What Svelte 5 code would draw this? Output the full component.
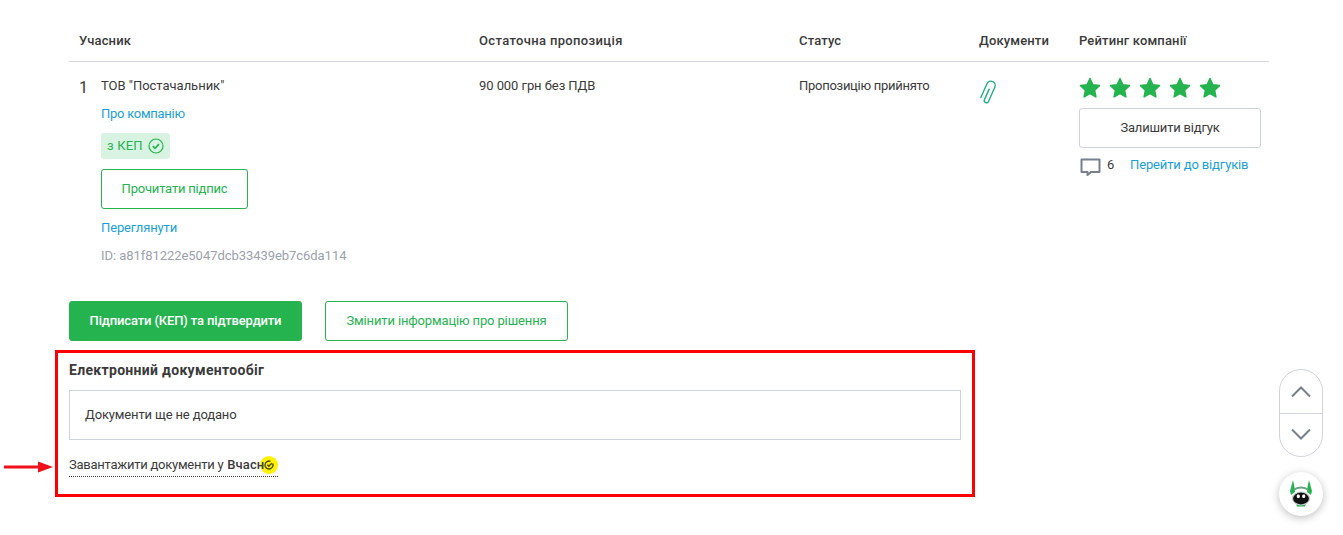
<script lang="ts">
  const columns = ['Учасник', 'Остаточна пропозиція', 'Статус', 'Документи', 'Рейтинг компанії'];
  const stars = [1, 2, 3, 4, 5];
</script>

<main class="page">
  <div class="table">
    <div class="row head">
      {#each columns as col}
        <div>{col}</div>
      {/each}
    </div>

    <div class="row body">
      <div class="participant">
        <span class="num">1</span>
        <div class="info">
          <div class="name">ТОВ "Постачальник"</div>
          <a class="link about">Про компанію</a>
          <div class="kep">
            з КЕП
            <svg width="16" height="16" viewBox="0 0 16 16" fill="none" stroke="#25b34f">
              <circle cx="8" cy="8" r="7" stroke-width="1.2" />
              <path d="M4.8 8.2l2.2 2.2 4-4.2" stroke-width="1.7" />
            </svg>
          </div>
          <button class="btn outline read">Прочитати підпис</button>
          <a class="link view">Переглянути</a>
          <div class="id">ID: a81f81222e5047dcb33439eb7c6da114</div>
        </div>
      </div>
      <div class="offer">90 000 грн без ПДВ</div>
      <div class="status">Пропозицію прийнято</div>
      <div class="docs">
        <svg width="22" height="26" viewBox="0 0 22 26" fill="none" stroke="#22b07a" stroke-width="1.4" stroke-linecap="round">
          <g transform="rotate(24 11 13)">
            <path d="M10.500 9V20.500a2.200 2.200 0 0 0 4.400 0V5a4.300 4.300 0 0 0-8.600 0V20" />
          </g>
        </svg>
      </div>
      <div class="rating">
        <div class="stars">
          {#each stars as s}
            <svg width="22" height="21" viewBox="0 0 22 21" fill="#25b34f" stroke="#25b34f" stroke-width="1.500" stroke-linejoin="round">
              <path d="M11 1.500l2.900 6.300 6.600.8-4.900 4.600 1.300 6.700-5.900-3.400-5.900 3.400 1.300-6.700-4.900-4.600 6.600-.8z" />
            </svg>
          {/each}
        </div>
        <button class="btn review">Залишити відгук</button>
        <div class="comments">
          <svg width="21" height="19" viewBox="0 0 21 19" fill="none" stroke="#76808f" stroke-width="2">
            <path d="M1.500 1.500h18v12.500h-8.500l-3.500 3v-3h-6z" stroke-linejoin="round" />
          </svg>
          <span class="count">6</span>
          <a class="link">Перейти до відгуків</a>
        </div>
      </div>
    </div>
  </div>

  <div class="actions">
    <button class="btn primary">Підписати (КЕП) та підтвердити</button>
    <button class="btn outline change">Змінити інформацію про рішення</button>
  </div>

  <section class="edo">
    <h3>Електронний документообіг</h3>
    <div class="empty">Документи ще не додано</div>
    <a class="upload">Завантажити документи у <b>Вчасн</b><span class="logo">
        <svg width="10" height="10" viewBox="0 0 10 10" fill="none" stroke="#4d4a20" stroke-width="1.400">
          <path d="M8.700 3.500A4 4 0 1 1 6.500 1.300" />
          <path d="M3.300 4.800l1.500 1.500 3-3" />
        </svg>
      </span></a>

    <!-- red annotation drawn over the screenshot -->
    <div class="frame"></div>
    <svg class="arrow" width="50" height="12" viewBox="0 0 50 12">
      <path d="M0 4.500h34v-4l15 5.500-15 5.500v-4H0z" fill="#f0101a" />
    </svg>
  </section>

  <div class="scroller">
    <button aria-label="Вгору">
      <svg width="22" height="13" viewBox="0 0 22 13" fill="none" stroke="#76808f" stroke-width="2"><path d="M2 11.500l9-9 9 9" /></svg>
    </button>
    <button aria-label="Вниз">
      <svg width="22" height="13" viewBox="0 0 22 13" fill="none" stroke="#76808f" stroke-width="2"><path d="M2 1.500l9 9 9-9" /></svg>
    </button>
  </div>

  <div class="bot">
    <svg width="28" height="30" viewBox="0 0 28 30">
      <path d="M6 1L3 12l1 4 4-3-.5-5zM22 1l3 11-1 4-4-3 .5-5z" fill="#25b34f" />
      <path d="M7 10.500q7-4 14 0" fill="none" stroke="#6aa383" stroke-width="2" />
      <path d="M9 24h10l-1 3.500h-8z" fill="#25b34f" />
      <ellipse cx="14" cy="19.500" rx="8.500" ry="6.500" fill="#111" stroke="#c9c9c9" stroke-width="1.200" />
      <rect x="9.800" y="15.500" width="3" height="3.500" rx="1.200" fill="#fff" />
      <rect x="15.200" y="15.500" width="3" height="3.500" rx="1.200" fill="#fff" />
    </svg>
  </div>
</main>

<style>
  :global(body) {
    margin: 0;
    background: #fff;
  }

  .page {
    position: relative;
    height: 535px;
    padding: 22px 0 0 69px;
    box-sizing: border-box;
    overflow: hidden;
    font-family: Roboto, "Liberation Sans", sans-serif;
    font-size: 13px;
    line-height: 20px;
    letter-spacing: -0.14px;
    color: #3a3a3a;
  }

  .table {
    width: 1200px;
  }

  .row {
    display: grid;
    grid-template-columns: 400px 320px 180px 100px 190px;
    padding-left: 10px;
  }

  .head {
    height: 40px;
    padding-top: 9px;
    box-sizing: border-box;
    border-bottom: 1px solid #d5d8e0;
    font-weight: 500;
    letter-spacing: 0.15px;
  }

  .head div:nth-child(2) {
    letter-spacing: 0.35px;
  }

  .body {
    padding-top: 14px;
  }

  .participant {
    display: flex;
  }

  .num {
    width: 22px;
    font-size: 16px;
    padding-top: 2px;
  }

  .info {
    display: flex;
    flex-direction: column;
    align-items: flex-start;
  }

  .name {
    letter-spacing: -0.02px;
  }

  .offer {
    letter-spacing: -0.07px;
  }

  .status {
    letter-spacing: -0.27px;
  }

  .link {
    color: #1b9fd8;
    cursor: pointer;
  }

  .about {
    margin-top: 8px;
    letter-spacing: -0.27px;
  }

  .kep {
    display: flex;
    align-items: center;
    gap: 5px;
    height: 26px;
    margin-top: 9px;
    padding: 0 6px;
    background: #d8f3e2;
    border-radius: 3px;
    color: #25b34f;
    letter-spacing: 0.15px;
  }

  .btn {
    font: inherit;
    letter-spacing: inherit;
    height: 40px;
    border-radius: 3px;
    background: #fff;
    cursor: pointer;
  }

  .outline {
    border: 1px solid #25b34f;
    color: #25b34f;
  }

  .read {
    width: 147px;
    margin-top: 10px;
    letter-spacing: -0.2px;
  }

  .view {
    margin-top: 9px;
  }

  .id {
    margin-top: 8px;
    color: #9ba1ab;
    letter-spacing: -0.05px;
  }

  .docs {
    padding-top: 4px;
  }

  .docs svg {
    display: block;
    margin-left: -2px;
  }

  .rating {
    margin-top: 1px;
  }

  .stars {
    display: flex;
    gap: 8px;
  }

  .review {
    display: block;
    width: 182px;
    margin-top: 10px;
    border: 1px solid #d0d4de;
    color: #3a3a3a;
    letter-spacing: -0.18px;
  }

  .comments {
    display: flex;
    align-items: center;
    margin-top: 7px;
    height: 20px;
  }

  .comments svg {
    margin: 5px 0 0 1px;
  }

  .count {
    margin-left: 6px;
    width: 23px;
  }

  .actions {
    display: flex;
    gap: 23px;
    margin-top: 35px;
  }

  .primary {
    width: 233px;
    border: 1px solid #25b34f;
    background: #25b34f;
    color: #fff;
    font-weight: 500;
  }

  .change {
    width: 243px;
  }

  .edo {
    position: relative;
    width: 892px;
    margin-top: 19px;
  }

  h3 {
    margin: 1px 0 0;
    font-size: 14px;
    font-weight: 700;
    line-height: 20px;
    letter-spacing: 0.31px;
  }

  .empty {
    margin-top: 10px;
    height: 50px;
    box-sizing: border-box;
    padding: 14px 15px;
    border: 1px solid #d0d4de;
  }

  .upload {
    display: inline-flex;
    align-items: center;
    margin-top: 14px;
    height: 22px;
    border-bottom: 1px dotted #333;
    letter-spacing: -0.25px;
    white-space: pre;
  }

  .upload b {
    position: relative;
    z-index: 1;
    font-weight: 500;
    margin-left: 1px;
    letter-spacing: 0.1px;
  }

  .logo {
    display: flex;
    align-items: center;
    justify-content: center;
    width: 18px;
    height: 18px;
    margin-left: -4px;
    border-radius: 50%;
    background: #fff200;
  }

  .frame {
    position: absolute;
    left: -14px;
    top: -10px;
    width: 920px;
    height: 147px;
    box-sizing: border-box;
    border: 3px solid #f00;
    pointer-events: none;
  }

  .arrow {
    position: absolute;
    left: -65px;
    top: 101px;
  }

  .scroller {
    position: absolute;
    left: 1279px;
    top: 369px;
    width: 44px;
    height: 88px;
    box-sizing: border-box;
    border: 1px solid #d0d4de;
    border-radius: 22px;
    display: flex;
    flex-direction: column;
  }

  .scroller button {
    flex: 1;
    padding: 0;
    border: 0;
    background: none;
    display: flex;
    align-items: center;
    justify-content: center;
  }

  .scroller button + button {
    border-top: 1px solid #d0d4de;
  }

  .bot {
    position: absolute;
    left: 1279px;
    top: 472px;
    width: 44px;
    height: 44px;
    border-radius: 50%;
    background: #fff;
    box-shadow: 0 2px 8px rgba(0, 0, 0, 0.25);
    display: flex;
    align-items: center;
    justify-content: center;
  }
</style>
